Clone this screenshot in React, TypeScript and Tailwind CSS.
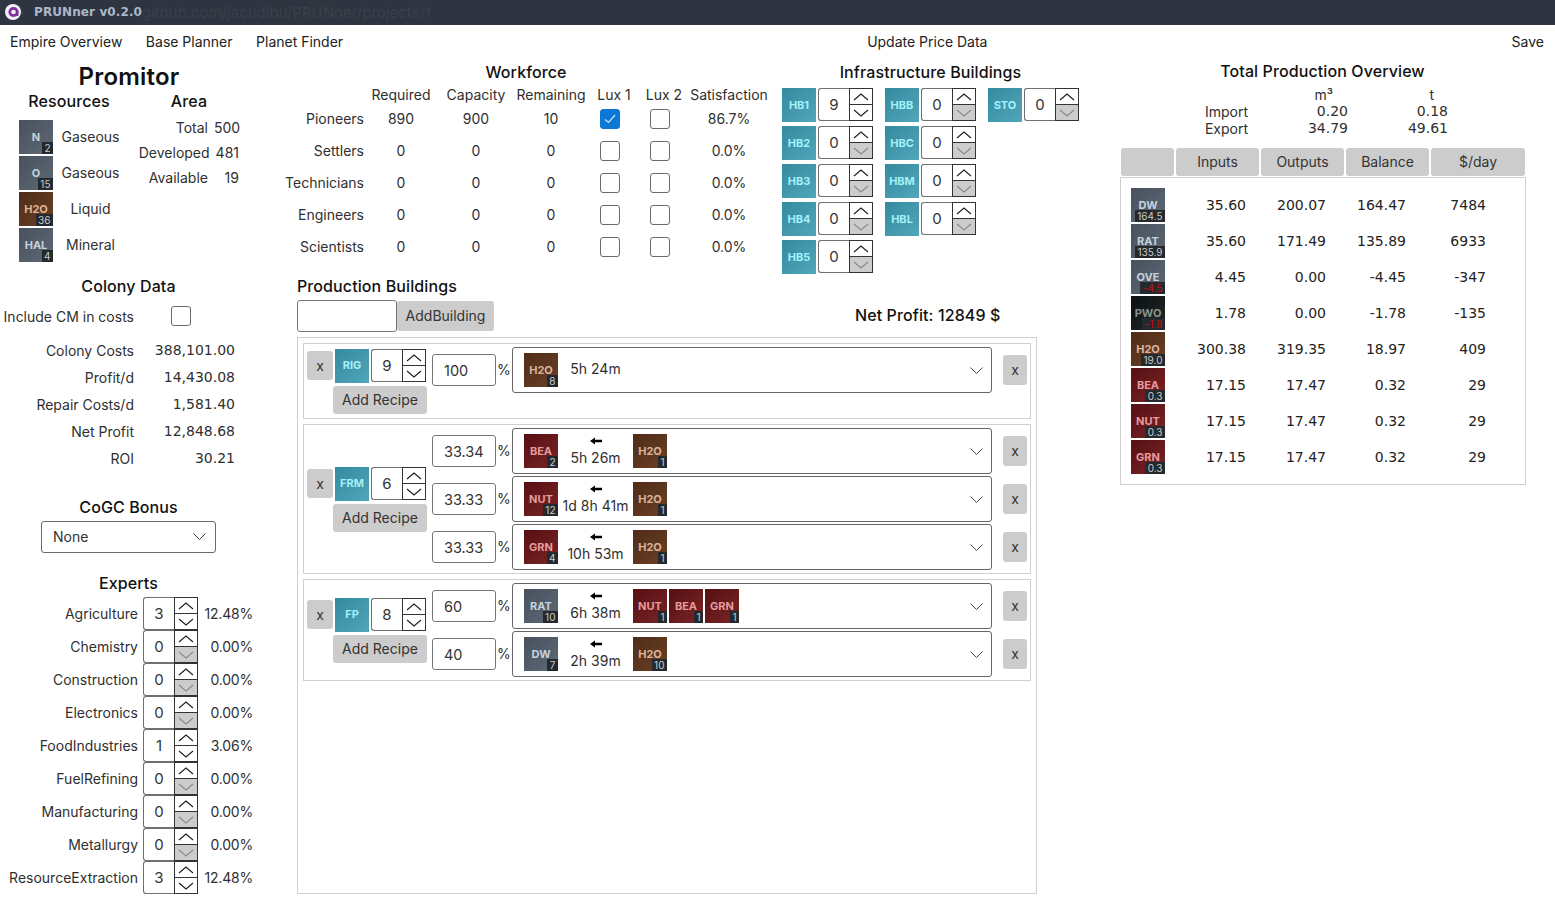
import { ReactNode } from 'react';

type Kind = 'gray' | 'brown' | 'red' | 'black' | 'teal';

const tileStyles: Record<Kind, string> = {
  gray: 'from-[#48525e] to-[#5d6975] text-[#c5d2df]',
  brown: 'from-[#4f2c17] to-[#6b4027] text-[#dcb39a]',
  red: 'from-[#560f13] to-[#7a2527] text-[#e79a9c]',
  black: 'from-[#0c1212] to-[#222828] text-[#8b9292]',
  teal: 'from-[#368a9f] to-[#50a6ba] text-[#a4f1f9]',
};

const kinds: Record<string, Kind> = {
  N: 'gray', O: 'gray', HAL: 'gray', DW: 'gray', RAT: 'gray', OVE: 'gray',
  PWO: 'black', H2O: 'brown', BEA: 'red', NUT: 'red', GRN: 'red',
};

const dejavu = "font-['DejaVu_Sans',sans-serif]";

function Tile({ code, badge, negative }: { code: string; badge?: string; negative?: boolean }) {
  const kind = kinds[code] ?? 'teal';
  return (
    <div className={`relative w-[34px] h-[34px] shrink-0 bg-linear-to-br ${tileStyles[kind]} flex items-center justify-center text-[11px] font-bold`}>
      {code}
      {badge && (
        <span className={`absolute right-0 bottom-0 h-[12px] px-[2.5px] bg-[#23292c] text-[10px] font-normal leading-[12px] ${negative ? 'text-[#c40f0f]' : 'text-[#c9cccc]'}`}>
          {badge}
        </span>
      )}
    </div>
  );
}

function Chevron({ down, muted }: { down?: boolean; muted?: boolean }) {
  return (
    <svg width="16" height="8" viewBox="0 0 16 8" fill="none" stroke={muted ? '#8a8a8a' : '#1c1c1c'} strokeWidth="1.1">
      <path d={down ? 'M1 1l7 6 7-6' : 'M1 7l7-6 7 6'} />
    </svg>
  );
}

function SelectChevron() {
  return (
    <svg width="13" height="7" viewBox="0 0 13 7" fill="none" stroke="#444" strokeWidth="1">
      <path d="M.5 .5l6 6 6-6" />
    </svg>
  );
}

function Spinner({ value }: { value: number }) {
  return (
    <div className="w-[55px] h-[33px] shrink-0 flex">
      <div className="w-[31px] border border-r-0 border-[#6f6f6f] rounded-l-[3px] bg-white flex items-center justify-center pt-[2px] text-[15px] text-[#333]">
        {value}
      </div>
      <div className="w-[24px] border border-[#333] flex flex-col">
        <div className="h-[15px] flex items-center justify-center">
          <Chevron />
        </div>
        <div className={`flex-1 border-t border-[#333] flex items-center justify-center ${value === 0 ? 'bg-[#cccccc]' : ''}`}>
          <Chevron down muted={value === 0} />
        </div>
      </div>
    </div>
  );
}

function Checkbox({ checked }: { checked?: boolean }) {
  return (
    <div className={`w-[20px] h-[20px] rounded-[3px] border flex items-center justify-center ${checked ? 'bg-[#0b78d6] border-[#0b78d6]' : 'border-[#6a6a6a] bg-white'}`}>
      {checked && (
        <svg width="12" height="10" viewBox="0 0 12 10" fill="none" stroke="#cfe6fa" strokeWidth="1.2">
          <path d="M1 5.5l3.5 3L11 1" />
        </svg>
      )}
    </div>
  );
}

function Heading({ children, className = '' }: { children: ReactNode; className?: string }) {
  return <div className={`h-[18px] leading-[18px] text-[16px] font-medium tracking-[0.1px] text-[#111] ${className}`}>{children}</div>;
}

function GrayButton({ children, className = '' }: { children: ReactNode; className?: string }) {
  return (
    <div className={`bg-[#cccccc] rounded-[3px] flex items-center justify-center text-[#333] ${className}`}>
      {children}
    </div>
  );
}

const experts = [
  ['Agriculture', 3, '12.48%'],
  ['Chemistry', 0, '0.00%'],
  ['Construction', 0, '0.00%'],
  ['Electronics', 0, '0.00%'],
  ['FoodIndustries', 1, '3.06%'],
  ['FuelRefining', 0, '0.00%'],
  ['Manufacturing', 0, '0.00%'],
  ['Metallurgy', 0, '0.00%'],
  ['ResourceExtraction', 3, '12.48%'],
] as const;

const colony = [
  ['Colony Costs', '388,101.00'],
  ['Profit/d', '14,430.08'],
  ['Repair Costs/d', '1,581.40'],
  ['Net Profit', '12,848.68'],
  ['ROI', '30.21'],
];

function LeftColumn() {
  return (
    <div className="w-[280px] shrink-0">
      <div className="w-[258px] mt-[3px] h-[30px] leading-[30px] text-center text-[24px] font-semibold tracking-[0.2px] text-[#111]">Promitor</div>
      <div className="flex h-[18px]">
        <Heading className="w-[138px] text-center">Resources</Heading>
        <Heading className="w-[102px] text-center">Area</Heading>
      </div>
      <div className="flex mt-[10px] h-[144px]">
        <div className="pl-[19px] w-[139px]">
          {[
            ['N', '2', 'Gaseous'],
            ['O', '15', 'Gaseous'],
            ['H2O', '36', 'Liquid'],
            ['HAL', '4', 'Mineral'],
          ].map(([code, badge, type]) => (
            <div key={code} className="flex h-[36px]">
              <Tile code={code} badge={badge} />
              <span className="w-[75px] text-center leading-[34px]">{type}</span>
            </div>
          ))}
        </div>
        <div className="w-[100px] -mt-[5px]">
          {[
            ['Total', '500'],
            ['Developed', '481'],
            ['Available', '19'],
          ].map(([label, value]) => (
            <div key={label} className="h-[25px] flex items-center justify-end gap-[6px] whitespace-nowrap">
              <span>{label}</span>
              <span className="w-[25px] text-right">{value}</span>
            </div>
          ))}
        </div>
      </div>
      <Heading className="mt-[13px] w-[257px] text-center">Colony Data</Heading>
      <div className="flex items-center mt-[11px] h-[20px]">
        <span className="w-[134px] text-right whitespace-nowrap">Include CM in costs</span>
        <div className="ml-[37px]">
          <Checkbox />
        </div>
      </div>
      <div className="mt-[11px]">
        {colony.map(([label, value]) => (
          <div key={label} className="flex h-[27px] items-center">
            <span className="w-[134px] text-right">{label}</span>
            <span className={`w-[101px] text-right ${dejavu}`}>{value}</span>
          </div>
        ))}
      </div>
      <Heading className="mt-[26px] w-[257px] text-center">CoGC Bonus</Heading>
      <div className="mt-[5px] ml-[41px] w-[175px] h-[32px] border border-[#6a6a6a] rounded-[3px] flex items-center justify-between pl-[11px] pr-[9px] pb-[2px] text-[#333]">
        None
        <SelectChevron />
      </div>
      <Heading className="mt-[21px] w-[257px] text-center">Experts</Heading>
      <div className="mt-[5px]">
        {experts.map(([label, value, pct]) => (
          <div key={label} className="flex h-[33px] items-center">
            <span className="w-[138px] text-right whitespace-nowrap mt-[-1px]">{label}</span>
            <div className="ml-[5px]">
              <Spinner value={value} />
            </div>
            <span className="w-[55px] text-right mt-[-1px] tracking-[-0.2px]">{pct}</span>
          </div>
        ))}
      </div>
    </div>
  );
}

const workforce = [
  ['Pioneers', '890', '900', '10', true, '86.7%'],
  ['Settlers', '0', '0', '0', false, '0.0%'],
  ['Technicians', '0', '0', '0', false, '0.0%'],
  ['Engineers', '0', '0', '0', false, '0.0%'],
  ['Scientists', '0', '0', '0', false, '0.0%'],
] as const;

function Workforce() {
  return (
    <div className="w-[490px] shrink-0">
      <Heading className="mt-[4px] ml-[2px] text-center">Workforce</Heading>
      <div className="grid grid-cols-[84px_74px_76px_74px_52px_48px_82px] mt-[5px] text-center">
        <div className="h-[16px]" />
        {['Required', 'Capacity', 'Remaining', 'Lux 1', 'Lux 2', 'Satisfaction'].map((h) => (
          <div key={h} className="h-[16px] leading-[18px] whitespace-nowrap">{h}</div>
        ))}
        {workforce.map(([name, req, cap, rem, lux, sat]) => (
          <div key={name} className="contents">
            <div className="h-[32px] flex items-center justify-end">{name}</div>
            <div className="h-[32px] flex items-center justify-center">{req}</div>
            <div className="h-[32px] flex items-center justify-center">{cap}</div>
            <div className="h-[32px] flex items-center justify-center">{rem}</div>
            <div className="h-[32px] flex items-center justify-center pr-[8px] pt-[2px]"><Checkbox checked={lux} /></div>
            <div className="h-[32px] flex items-center justify-center pr-[8px] pt-[2px]"><Checkbox /></div>
            <div className="h-[32px] flex items-center justify-center">{sat}</div>
          </div>
        ))}
      </div>
    </div>
  );
}

const infra: [string, number][][] = [
  [['HB1', 9], ['HB2', 0], ['HB3', 0], ['HB4', 0], ['HB5', 0]],
  [['HBB', 0], ['HBC', 0], ['HBM', 0], ['HBL', 0]],
  [['STO', 0]],
];

function Infrastructure() {
  return (
    <div className="ml-[12px] w-[297px] shrink-0">
      <Heading className="mt-[4px] text-center">Infrastructure Buildings</Heading>
      <div className="flex gap-[12px] mt-[7px]">
        {infra.map((col, i) => (
          <div key={i} className="flex flex-col gap-[4px]">
            {col.map(([code, value]) => (
              <div key={code} className="flex gap-[2px]">
                <Tile code={code} />
                <Spinner value={value} />
              </div>
            ))}
          </div>
        ))}
      </div>
    </div>
  );
}

type Recipe = {
  percent: string;
  output: [string, string];
  time: string;
  inputs: [string, string][];
  arrow?: boolean;
};

type Building = { code: string; count: number; height: string; recipes: Recipe[] };

const buildings: Building[] = [
  {
    code: 'RIG',
    count: 9,
    height: 'h-[76px]',
    recipes: [{ percent: '100', output: ['H2O', '8'], time: '5h 24m', inputs: [] }],
  },
  {
    code: 'FRM',
    count: 6,
    height: 'h-[150px]',
    recipes: [
      { percent: '33.34', output: ['BEA', '2'], time: '5h 26m', arrow: true, inputs: [['H2O', '1']] },
      { percent: '33.33', output: ['NUT', '12'], time: '1d 8h 41m', arrow: true, inputs: [['H2O', '1']] },
      { percent: '33.33', output: ['GRN', '4'], time: '10h 53m', arrow: true, inputs: [['H2O', '1']] },
    ],
  },
  {
    code: 'FP',
    count: 8,
    height: 'h-[102px]',
    recipes: [
      { percent: '60', output: ['RAT', '10'], time: '6h 38m', arrow: true, inputs: [['NUT', '1'], ['BEA', '1'], ['GRN', '1']] },
      { percent: '40', output: ['DW', '7'], time: '2h 39m', arrow: true, inputs: [['H2O', '10']] },
    ],
  },
];

function RecipeRow({ recipe }: { recipe: Recipe }) {
  return (
    <div className="flex items-center h-[46px]">
      <div className="w-[64px] h-[32px] border border-[#777] rounded-[3px] flex items-center pl-[11px] pt-[2px] text-[14.5px] text-[#333]">
        {recipe.percent}
      </div>
      <span className="w-[16px] pl-[1px] -mt-[2px]">%</span>
      <div className="w-[480px] h-[46px] border border-[#666] rounded-[3px] flex items-center pl-[11px] pr-[8px]">
        <Tile code={recipe.output[0]} badge={recipe.output[1]} />
        <div className="w-[75px] shrink-0 flex flex-col items-center whitespace-nowrap -mt-[2px]">
          {recipe.arrow && (
            <svg width="12" height="16" viewBox="0 0 12 16" fill="#000">
              <path d="M0 8l5-3.4v2.1h7v2.6H5v2.1z" />
            </svg>
          )}
          <span className="h-[18px] leading-[18px]">{recipe.time}</span>
        </div>
        <div className="flex gap-[2px]">
          {recipe.inputs.map(([code, badge]) => (
            <Tile key={code} code={code} badge={badge} />
          ))}
        </div>
        <div className="ml-auto flex">
          <SelectChevron />
        </div>
      </div>
      <GrayButton className="ml-[11px] w-[24px] h-[30px] pb-[2px]">x</GrayButton>
    </div>
  );
}

function BuildingGroup({ building }: { building: Building }) {
  return (
    <div className={`${building.height} border border-[#d0d0d0] p-[3px] flex`}>
      <div className="self-center w-[120px] shrink-0">
        <div className="flex items-center">
          <GrayButton className="w-[26px] h-[29px]">x</GrayButton>
          <div className="ml-[2px]">
            <Tile code={building.code} />
          </div>
          <div className="ml-[2px]">
            <Spinner value={building.count} />
          </div>
        </div>
        <GrayButton className="ml-[26px] mt-[3px] w-[94px] h-[28px]">Add Recipe</GrayButton>
      </div>
      <div className="ml-[5px] flex flex-col gap-[2px]">
        {building.recipes.map((r) => (
          <RecipeRow key={r.percent + r.time} recipe={r} />
        ))}
      </div>
    </div>
  );
}

function Production() {
  return (
    <div className="ml-[17px] w-[740px]">
      <Heading>Production Buildings</Heading>
      <div className="flex items-center mt-[5px] h-[32px]">
        <div className="w-[100px] h-[32px] border border-[#777] rounded-[3px]" />
        <GrayButton className="w-[97px] h-[30px] pb-[1px]">AddBuilding</GrayButton>
        <div className="ml-[361px] -mt-[3px] text-[16px] font-medium tracking-[0.1px] text-[#111]">Net Profit: 12849 $</div>
      </div>
      <div className="mt-[5px] h-[557px] border border-[#d0d0d0] p-[5px] flex flex-col gap-[5px]">
        {buildings.map((b) => (
          <BuildingGroup key={b.code} building={b} />
        ))}
      </div>
    </div>
  );
}

const totals: [string, string, string, string, string, string, boolean?][] = [
  ['DW', '164.5', '35.60', '200.07', '164.47', '7484'],
  ['RAT', '135.9', '35.60', '171.49', '135.89', '6933'],
  ['OVE', '-4.5', '4.45', '0.00', '-4.45', '-347', true],
  ['PWO', '-1.8', '1.78', '0.00', '-1.78', '-135', true],
  ['H2O', '19.0', '300.38', '319.35', '18.97', '409'],
  ['BEA', '0.3', '17.15', '17.47', '0.32', '29'],
  ['NUT', '0.3', '17.15', '17.47', '0.32', '29'],
  ['GRN', '0.3', '17.15', '17.47', '0.32', '29'],
];

function Overview() {
  return (
    <div className="w-[406px] shrink-0">
      <Heading className="mt-[3px] ml-[-1px] text-center">Total Production Overview</Heading>
      <div className="grid grid-cols-[128px_100px_100px] mt-[6px] text-right">
        <div className="h-[17px]" />
        <div className="h-[17px] leading-[18px] pr-[15px]">m³</div>
        <div className="h-[17px] leading-[18px] pr-[14px]">t</div>
        {[
          ['Import', '0.20', '0.18'],
          ['Export', '34.79', '49.61'],
        ].map(([label, m, t]) => (
          <div key={label} className="contents">
            <div className="h-[17px] leading-[17px]">{label}</div>
            <div className={`h-[17px] leading-[17px] ${dejavu}`}>{m}</div>
            <div className={`h-[17px] leading-[17px] ${dejavu}`}>{t}</div>
          </div>
        ))}
      </div>
      <div className="flex gap-[2px] mt-[11px] pl-[1px]">
        <GrayButton className="w-[53px] h-[28px]">{''}</GrayButton>
        {['Inputs', 'Outputs', 'Balance'].map((h) => (
          <GrayButton key={h} className="w-[83px] h-[28px] pb-[1px]">{h}</GrayButton>
        ))}
        <GrayButton className="w-[94px] h-[28px] pb-[1px]">$/day</GrayButton>
      </div>
      <div className="mt-[1px] h-[308px] border border-[#d0d0d0] pt-[10px] pl-[10px]">
        {totals.map(([code, badge, inputs, outputs, balance, perDay, negative]) => (
          <div key={code} className="flex h-[36px]">
            <Tile code={code} badge={badge} negative={negative} />
            <div className={`flex h-[34px] leading-[34px] ${dejavu} text-[#222]`}>
              <span className="w-[81px] text-right">{inputs}</span>
              <span className="w-[80px] text-right">{outputs}</span>
              <span className="w-[80px] text-right">{balance}</span>
              <span className="w-[80px] text-right">{perDay}</span>
            </div>
          </div>
        ))}
      </div>
    </div>
  );
}

export default function App() {
  return (
    <div className="w-[1555px] h-[904px] overflow-hidden bg-white text-[14px] text-[#2f2f2f] font-['Inter',sans-serif] flex flex-col">
      <div className="relative h-[25px] shrink-0 bg-[#2e3440] flex items-center pl-[5px]">
        <svg width="18" height="18" viewBox="0 0 18 18" className="-mt-[1px]">
          <circle cx="8" cy="9" r="8" fill="#f4eff7" />
          <circle cx="8.5" cy="9" r="3.7" fill="none" stroke="#7f2f9e" strokeWidth="2.8" />
          <path d="M12.2 8v5" stroke="#7f2f9e" strokeWidth="2.4" />
          <path d="M16 10h2" stroke="#5a6070" strokeWidth="1" />
        </svg>
        <span className={`ml-[11px] text-[12px] font-bold tracking-[0.1px] text-[#aab8ca] -mt-[2px] ${dejavu}`}>PRUNner v0.2.0</span>
        <span className="absolute left-[142px] top-[2px] text-[15px] text-[#3a404c] whitespace-nowrap">github.com/jacudibu/PRUNner/projects/1</span>
      </div>
      <div className="h-[34px] shrink-0 flex items-center pl-[10px] pr-[11px] pb-[2px] text-[#222]">
        <div className="flex gap-[24px]">
          <span>Empire Overview</span>
          <span className="-ml-[0.5px]">Base Planner</span>
          <span className="-ml-[0.5px]">Planet Finder</span>
        </div>
        <span className="ml-[524px]">Update Price Data</span>
        <span className="ml-auto">Save</span>
      </div>
      <div className="flex flex-1 min-h-0">
        <LeftColumn />
        <div className="w-[840px] shrink-0">
          <div className="flex h-[218px]">
            <Workforce />
            <Infrastructure />
          </div>
          <Production />
        </div>
        <Overview />
      </div>
    </div>
  );
}
